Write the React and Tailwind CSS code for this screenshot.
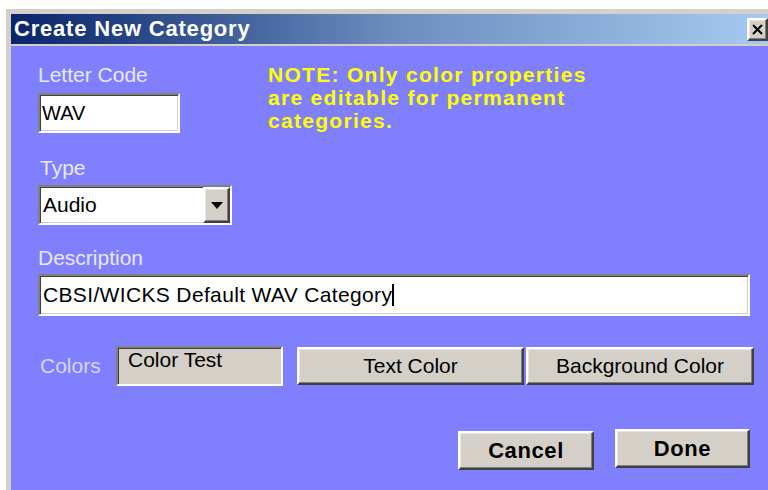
import React from "react";

const ui = { fontFamily: '"Liberation Sans", Arial, sans-serif' };

// classic 3D edges
const sunken =
  "border-2 border-t-[#808080] border-l-[#808080] border-r-white border-b-white shadow-[inset_1px_1px_0_#404040,inset_-1px_-1px_0_#d4d0c8]";
const raised =
  "border-2 border-t-white border-l-white border-r-[#404040] border-b-[#404040] shadow-[inset_-1px_-1px_0_#808080,inset_1px_1px_0_#e8e6e0]";

const Label = ({ children, className = "" }) => (
  <div className={`text-[21px] leading-[24px] text-[#e8e8ff] ${className}`}>{children}</div>
);

const CloseButton = () => (
  <div className={`w-[21px] h-[23px] bg-[#d4d0c8] ${raised} flex items-center justify-center`}>
    <svg width="11" height="11" viewBox="0 0 11 11">
      <path d="M1 1 L10 10 M10 1 L1 10" stroke="#000" strokeWidth="2" />
    </svg>
  </div>
);

export default function App() {
  return (
    <div className="w-[768px] h-[490px] bg-white pt-[9px] pl-[6px] overflow-hidden" style={ui}>
      <div className="h-full bg-[#d4d0c8] pt-[5px] pl-[5px] flex flex-col">
        {/* title bar */}
        <div className="h-[30px] shrink-0 flex items-center justify-between bg-gradient-to-r from-[#0a246a] via-[#6c8cbe] to-[#a6caf0]">
          <span className="pl-[3px] text-white font-bold text-[22px] leading-[30px] tracking-[0.8px]">
            Create New Category
          </span>
          <CloseButton />
        </div>

        {/* dialog body */}
        <div className="mt-[2px] flex-1 bg-[#8080ff] pl-[27px] pr-[18px] pt-[17px]">
          <div className="flex">
            <div className="w-[230px] shrink-0">
              <Label>Letter Code</Label>
              <div className={`mt-[6px] w-[142px] h-[40px] bg-white ${sunken} flex items-center pl-[2px]`}>
                <span className="text-[20px] text-black">WAV</span>
              </div>

              <Label className="mt-[23px] pl-[2px]">Type</Label>
              <div className={`mt-[5px] w-[194px] h-[40px] bg-white ${sunken} flex items-stretch`}>
                <span className="flex-1 flex items-center pl-[3px] text-[21px] text-black">Audio</span>
                <div className={`w-[27px] bg-[#d4d0c8] ${raised} flex items-center justify-center`}>
                  <svg width="12" height="7" viewBox="0 0 12 7">
                    <path d="M0 0 H12 L6 7 Z" fill="#000" />
                  </svg>
                </div>
              </div>
            </div>

            <div className="text-[21px] leading-[23px] font-bold text-[#ffff00] tracking-[1.3px]">
              <div>NOTE: Only color properties</div>
              <div>are editable for permanent</div>
              <div>categories.</div>
            </div>
          </div>

          <Label className="mt-[21px]">Description</Label>
          <div className={`mt-[4px] h-[42px] bg-white ${sunken} flex items-center pl-[3px]`}>
            <span className="text-[21px] text-black tracking-[0.35px]">CBSI/WICKS Default WAV Category</span>
            <span className="w-[1.5px] h-[22px] bg-black" />
          </div>

          <div className="mt-[30px] flex items-center">
            <span className="w-[78px] pl-[2px] text-[21px] text-[#d6d6ff]">Colors</span>
            <div className={`w-[167px] h-[40px] bg-[#d4d0c8] ${sunken} pl-[10px] text-[21px] leading-[24px] text-black`}>
              Color Test
            </div>
            <button className={`ml-[14px] w-[227px] h-[38px] bg-[#d4d0c8] ${raised} text-[21px] text-black`}>
              Text Color
            </button>
            <button className={`ml-[2px] w-[228px] h-[38px] mr-[-4px] bg-[#d4d0c8] ${raised} text-[21px] text-black`}>
              Background Color
            </button>
          </div>

          <div className="mt-[43px] flex justify-end items-start gap-[21px]">
            <button className={`mt-[2px] w-[136px] h-[39px] bg-[#d4d0c8] ${raised} text-[22px] font-bold tracking-[0.6px] text-black`}>
              Cancel
            </button>
            <button className={`w-[135px] h-[39px] bg-[#d4d0c8] ${raised} text-[22px] font-bold tracking-[0.6px] text-black`}>
              Done
            </button>
          </div>
        </div>
      </div>
    </div>
  );
}
